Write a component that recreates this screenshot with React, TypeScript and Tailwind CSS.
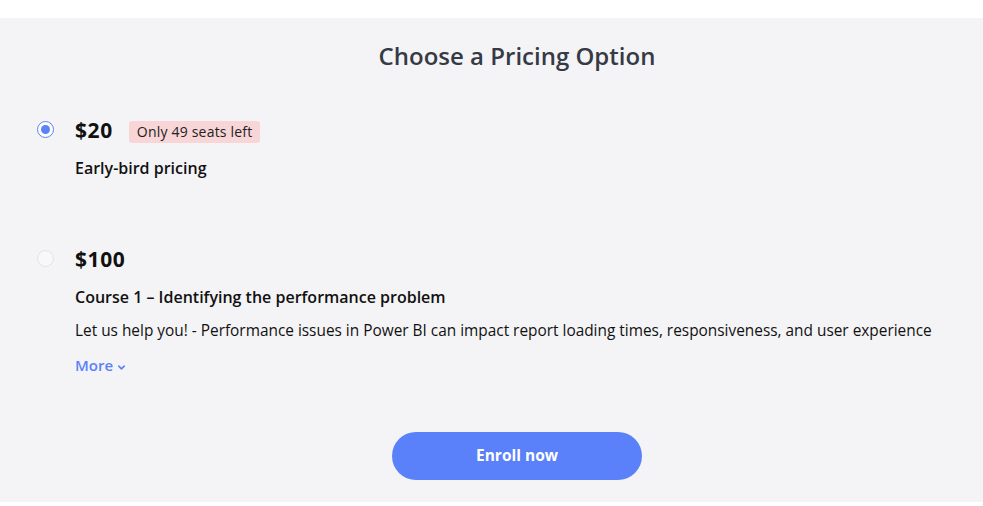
import React, { useState } from 'react';

const font = { fontFamily: '"Open Sans", Lato, sans-serif' };

interface Option {
  price: string;
  badge?: string;
  title: string;
  description?: string;
}

const options: Option[] = [
  { price: '$20', badge: 'Only 49 seats left', title: 'Early-bird pricing' },
  {
    price: '$100',
    title: 'Course 1 – Identifying the performance problem',
    description:
      'Let us help you! - Performance issues in Power BI can impact report loading times, responsiveness, and user experience',
  },
];

const Radio = ({ checked }: { checked: boolean }) => (
  <span
    className={`mt-[2px] flex h-[17px] w-[17px] shrink-0 items-center justify-center rounded-full border ${
      checked ? 'border-[#5b82f8] bg-white' : 'border-[#e2e2e6] bg-[#f8f8fa]'
    }`}
  >
    {checked && <span className="h-[9px] w-[9px] rounded-full bg-[#5b82f8]" />}
  </span>
);

export default function App() {
  const [selected, setSelected] = useState(0);

  return (
    <div className="min-h-[506px] bg-white pt-[18px]" style={font}>
      <section className="h-[484px] bg-[#f4f4f6]">
        <h2 className="pl-[51px] pt-[22px] text-center text-[24px] font-semibold leading-[32px] text-[#363a45]">
          Choose a Pricing Option
        </h2>

        <div className="mt-[47px] flex flex-col gap-[69px] px-[37px]">
          {options.map((opt, i) => (
            <div key={opt.price} className="flex cursor-pointer gap-[21px]" onClick={() => setSelected(i)}>
              <Radio checked={selected === i} />
              <div className="flex flex-col">
                <div className="flex h-[24px] items-center gap-[16px]">
                  <span className="text-[21px] font-bold tracking-[0.6px] text-[#111]">{opt.price}</span>
                  {opt.badge && (
                    <span className="mt-[2px] rounded-[3px] bg-[#f8d5d7] px-[8px] py-[2px] text-[14px] leading-[18px] tracking-[0.2px] text-[#222]">
                      {opt.badge}
                    </span>
                  )}
                </div>
                <p className="mt-[14px] text-[16px] font-semibold leading-[22px] text-[#111]">{opt.title}</p>
                {opt.description && (
                  <>
                    <p className="mt-[12px] text-[15.4px] leading-[22px] text-[#111]">{opt.description}</p>
                    <button className="mt-[12px] flex items-center gap-[4px] self-start text-[15px] font-semibold leading-[22px] text-[#5b82f8]">
                      More
                      <svg width="9" height="9" viewBox="0 0 10 10" className="mt-[5px]">
                        <path d="M2 3.5 5 6.5 8 3.5" fill="none" stroke="currentColor" strokeWidth="1.8" strokeLinecap="round" strokeLinejoin="round" />
                      </svg>
                    </button>
                  </>
                )}
              </div>
            </div>
          ))}
        </div>

        <div className="mt-[56px] flex justify-center pl-[51px]">
          <button className="h-[48px] w-[250px] rounded-full bg-[#5a81fa] text-[15.5px] font-bold text-white">
            Enroll now
          </button>
        </div>
      </section>
    </div>
  );
}
